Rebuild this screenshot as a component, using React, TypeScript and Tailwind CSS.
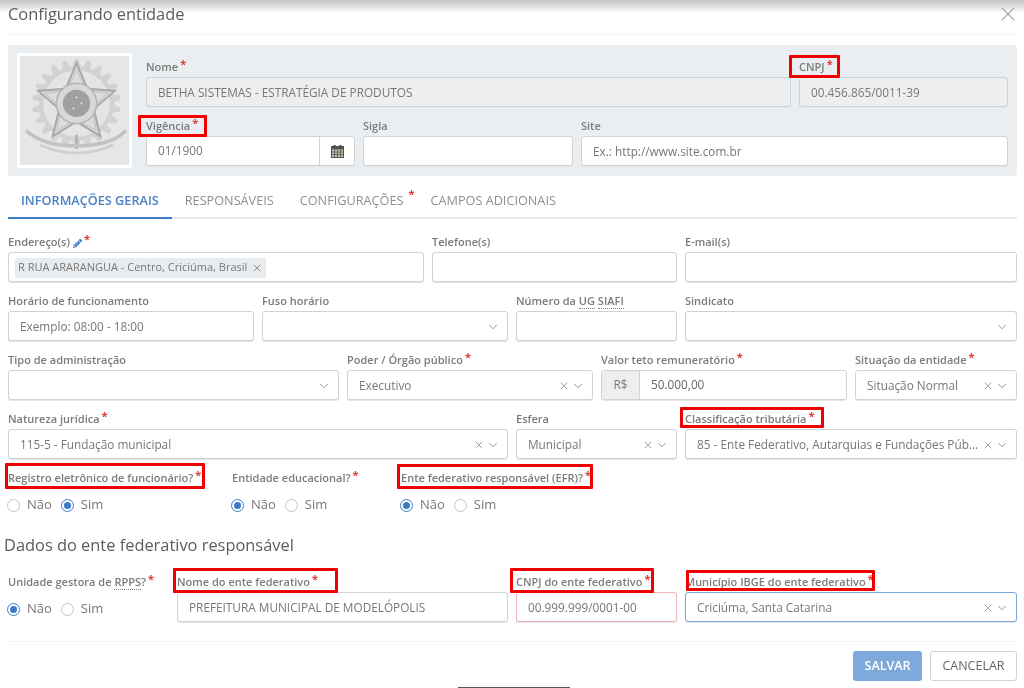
import type { ReactNode } from "react";
import { ChevronDown, X } from "lucide-react";
import { FaPencilAlt } from "react-icons/fa";

const inputBase =
  "h-[30px] w-full border border-[#d0d3d5] rounded-[3px] flex items-center pt-[1px] text-[11.8px] text-[#777] shadow-[0_1px_0_#e3e5e6]";

const redBox = "absolute border-[3px] border-[#f00000] rounded-[1px]";

function Star() {
  return (
    <span className="inline-block ml-[2px] text-[#e03a3a] text-[11px] font-bold leading-none -translate-y-[4px]">
      *
    </span>
  );
}

function Label({ text, required, box, children }: { text?: string; required?: boolean; box?: string; children?: ReactNode }) {
  return (
    <div className="relative h-[19px] flex items-center text-[11px] font-semibold text-[#7b7b7b] whitespace-nowrap">
      <span>{text}{children}</span>
      {required && <Star />}
      {box && <div className={`${redBox} ${box}`} />}
    </div>
  );
}

function Input({ value, placeholder, disabled, className }: { value?: string; placeholder?: string; disabled?: boolean; className?: string }) {
  return (
    <div className={`${inputBase} px-[11px] ${disabled ? "bg-[#eceef0] text-[#8f8f8f]" : "bg-white"} ${placeholder ? "text-[#9a9a9a]" : ""} ${className ?? ""}`}>
      {value ?? placeholder}
    </div>
  );
}

function Select({ value, clear, className }: { value?: string; clear?: boolean; className?: string }) {
  return (
    <div className={`${inputBase} bg-white pl-[11px] pr-[7px] ${className ?? ""}`}>
      <span className="flex-1 whitespace-nowrap">{value}</span>
      {clear && <X size={12} strokeWidth={1.5} className="text-[#888] mr-[1px] shrink-0" />}
      <ChevronDown size={14} strokeWidth={1.5} className="text-[#888] shrink-0" />
    </div>
  );
}

function Radios({ checked }: { checked: "Não" | "Sim" }) {
  return (
    <div className="h-[30px] -ml-[1px] pt-[4px] flex items-center gap-[9px] text-[13px] text-[#777]">
      {(["Não", "Sim"] as const).map((opt) => (
        <div key={opt} className="flex items-center gap-[7px]">
          {opt === checked ? (
            <span className="w-[13px] h-[13px] rounded-full border-[1.5px] border-[#3b7cc9] flex items-center justify-center">
              <span className="w-[7px] h-[7px] rounded-full bg-[#3b7cc9]" />
            </span>
          ) : (
            <span className="w-[13px] h-[13px] rounded-full border-[1.5px] border-[#c4c4c4]" />
          )}
          <span>{opt}</span>
        </div>
      ))}
    </div>
  );
}

function Abbr({ children }: { children: ReactNode }) {
  return <span className="border-b border-dotted border-[#888]">{children}</span>;
}

function CalendarIcon() {
  return (
    <svg viewBox="0 0 13 13" className="w-[13px] h-[13px]">
      <rect x="0.5" y="1.5" width="12" height="11" fill="#c9bfa8" stroke="#555" />
      <rect x="0.5" y="1.5" width="12" height="3" fill="#555" />
      <rect x="2.5" y="0" width="2" height="3" fill="#444" />
      <rect x="8.5" y="0" width="2" height="3" fill="#444" />
      <path d="M0.5 7H12.5M0.5 9.5H12.5M3.5 4.5V12.5M6.5 4.5V12.5M9.5 4.5V12.5" stroke="#555" strokeWidth="0.8" />
    </svg>
  );
}

function polar(cx: number, cy: number, r: number, deg: number) {
  const a = ((deg - 90) * Math.PI) / 180;
  return `${(cx + r * Math.cos(a)).toFixed(1)},${(cy + r * Math.sin(a)).toFixed(1)}`;
}

function CoatOfArms() {
  const gear = Array.from({ length: 22 }, (_, i) => {
    const s = i * (360 / 22);
    return [polar(56, 47, 37, s - 6), polar(56, 47, 44, s - 2.5), polar(56, 47, 44, s + 2.5), polar(56, 47, 37, s + 6)].join(" ");
  }).join(" ");
  const star = Array.from({ length: 10 }, (_, i) => polar(56, 47, i % 2 ? 18 : 40, i * 36)).join(" ");
  const innerStar = Array.from({ length: 10 }, (_, i) => polar(56, 47, i % 2 ? 16 : 33, i * 36)).join(" ");
  return (
    <svg viewBox="0 0 108 108" className="w-full h-full blur-[0.5px]">
      <polygon points={gear} fill="#d2d2d2" />
      <circle cx="56" cy="47" r="33" fill="#e4e4e4" />
      <polygon points={star} fill="#dcdcdc" stroke="#a8a8a8" strokeWidth="2" />
      <polygon points={innerStar} fill="none" stroke="#c2c2c2" strokeWidth="1" />
      <circle cx="56" cy="47" r="20" fill="#d8d8d8" stroke="#b4b4b4" strokeWidth="1.5" />
      <circle cx="56" cy="47" r="13.5" fill="#a0a0a0" />
      <circle cx="56" cy="41" r="0.9" fill="#eee" />
      <circle cx="61" cy="47" r="0.9" fill="#eee" />
      <circle cx="53" cy="52" r="0.9" fill="#eee" />
      <path d="M56 78 V92" stroke="#b4b4b4" strokeWidth="3" />
      <path d="M6 74 C 20 86 36 89 56 89 C 76 89 92 86 105 74" fill="none" stroke="#c2c2c2" strokeWidth="3.5" />
      <path d="M20 88 C 32 94 44 96 56 96 C 68 96 80 94 92 88" fill="none" stroke="#cdcdcd" strokeWidth="2.5" />
    </svg>
  );
}

export default function App() {
  return (
    <div
      className="relative w-[1024px] h-[688px] overflow-hidden bg-white px-[8px] text-[#777] blur-[0.4px]"
      style={{ fontFamily: '"Open Sans", sans-serif' }}
    >
      {/* sombra do topo */}
      <div className="absolute left-0 right-0 top-0 h-[13px] bg-gradient-to-b from-[#c4c4c4] to-white" />

      {/* Cabeçalho */}
      <div className="relative h-[35px] border-b border-[#f4f4f4] flex items-center justify-between pb-[7px] pt-[1px]">
        <h1 className="text-[16.4px] text-[#5c5c5c]">Configurando entidade</h1>
        <X size={24} strokeWidth={1.5} className="text-[#b5b5b5] -mr-[4px]" />
      </div>

      {/* Painel da entidade */}
      <div className="mt-[10px] h-[131px] bg-[#ebeef0] rounded-[3px] pl-[9px] pr-[9px] pt-[13px] flex gap-[14px] w-[1009px]">
        <div className="-mt-[5px] w-[115px] h-[115px] bg-white p-[3px] shrink-0">
          <div className="w-full h-full bg-[#e6e6e6]">
            <CoatOfArms />
          </div>
        </div>
        <div className="flex-1">
          <div className="flex gap-[8px]">
            <div className="w-[645px]">
              <Label text="Nome" required />
              <Input value="BETHA SISTEMAS - ESTRATÉGIA DE PRODUTOS" disabled />
            </div>
            <div className="w-[209px]">
              <Label text="CNPJ" required box="-left-[10px] -top-[3px] w-[51px] h-[23px]" />
              <Input value="00.456.865/0011-39" disabled />
            </div>
          </div>
          <div className="flex gap-[8px] mt-[10px]">
            <div className="w-[209px]">
              <Label text="Vigência" required box="-left-[8px] -top-[2px] w-[69px] h-[22px]" />
              <div className={`${inputBase} bg-white overflow-hidden !pt-0`}>
                <span className="flex-1 px-[11px]">01/1900</span>
                <span className="w-[35px] h-full border-l border-[#d0d3d5] flex items-center justify-center">
                  <CalendarIcon />
                </span>
              </div>
            </div>
            <div className="w-[210px]">
              <Label text="Sigla" />
              <Input />
            </div>
            <div className="w-[427px]">
              <Label text="Site" />
              <Input placeholder="Ex.: http://www.site.com.br" />
            </div>
          </div>
        </div>
      </div>

      {/* Abas */}
      <div className="mt-[8px] h-[35px] w-[1009px] border-b-2 border-[#e8e8e8] flex text-[12.7px] text-[#8f8f8f]">
        <div className="h-[35px] px-[13px] flex items-center border-b-2 border-[#3b7cc9] text-[#4a80c4] font-semibold">INFORMAÇÕES GERAIS</div>
        <div className="h-[33px] px-[13px] flex items-center">RESPONSÁVEIS</div>
        <div className="h-[33px] pl-[13px] pr-[14px] flex items-center relative">
          CONFIGURAÇÕES
          <span className="absolute right-[3px] top-[4px] text-[#e03a3a] text-[11px] font-bold leading-none">*</span>
        </div>
        <div className="h-[33px] px-[13px] flex items-center">CAMPOS ADICIONAIS</div>
      </div>

      {/* Formulário */}
      <div className="w-[1009px] mt-[14px] flex flex-col gap-[10px]">
        <div className="flex gap-[8px]">
          <div className="w-[416px]">
            <Label required>
              Endereço(s)
              <FaPencilAlt size={9} className="inline ml-[3px] text-[#3b7cc9]" />
            </Label>
            <div className={`${inputBase} bg-white pl-[6px]`}>
              <span className="h-[20px] px-[3px] flex items-center gap-[4px] bg-[#e9ecef] rounded-[2px] text-[11px]">
                R RUA ARARANGUA - Centro, Criciúma, Brasil
                <X size={12} strokeWidth={1.5} className="text-[#777]" />
              </span>
            </div>
          </div>
          <div className="w-[245px]">
            <Label text="Telefone(s)" />
            <Input />
          </div>
          <div className="w-[332px]">
            <Label text="E-mail(s)" />
            <Input />
          </div>
        </div>

        <div className="flex gap-[8px]">
          <div className="w-[246px]">
            <Label text="Horário de funcionamento" />
            <Input placeholder="Exemplo: 08:00 - 18:00" />
          </div>
          <div className="w-[246px]">
            <Label text="Fuso horário" />
            <Select />
          </div>
          <div className="w-[161px]">
            <Label>
              Número da <Abbr>UG</Abbr> <Abbr>SIAFI</Abbr>
            </Label>
            <Input />
          </div>
          <div className="w-[332px]">
            <Label text="Sindicato" />
            <Select />
          </div>
        </div>

        <div className="flex gap-[8px]">
          <div className="w-[331px]">
            <Label text="Tipo de administração" />
            <Select />
          </div>
          <div className="w-[246px]">
            <Label text="Poder / Órgão público" required />
            <Select value="Executivo" clear />
          </div>
          <div className="w-[246px]">
            <Label text="Valor teto remuneratório" required />
            <div className={`${inputBase} bg-white overflow-hidden !pt-0`}>
              <span className="w-[38px] h-full bg-[#eceef0] border-r border-[#d0d3d5] flex items-center justify-center shrink-0">R$</span>
              <span className="px-[11px] text-[#666]">50.000,00</span>
            </div>
          </div>
          <div className="w-[162px]">
            <Label text="Situação da entidade" required />
            <Select value="Situação Normal" clear />
          </div>
        </div>

        <div className="flex gap-[8px]">
          <div className="w-[500px]">
            <Label text="Natureza jurídica" required />
            <Select value="115-5 - Fundação municipal" clear />
          </div>
          <div className="w-[161px]">
            <Label text="Esfera" />
            <Select value="Municipal" clear />
          </div>
          <div className="w-[332px]">
            <Label text="Classificação tributária" required box="-left-[5px] -top-[3px] w-[144px] h-[21px]" />
            <Select value="85 - Ente Federativo, Autarquias e Fundações Púb..." clear />
          </div>
        </div>

        <div className="flex">
          <div className="w-[223px]">
            <Label text="Registro eletrônico de funcionário?" required box="-left-[3px] -top-[6px] w-[200px] h-[26px]" />
            <Radios checked="Sim" />
          </div>
          <div className="w-[170px] pl-[1px]">
            <Label text="Entidade educacional?" required />
            <Radios checked="Não" />
          </div>
          <div className="w-[300px]">
            <Label text="Ente federativo responsável (EFR)?" required box="-left-[4px] -top-[5px] w-[196px] h-[25px]" />
            <Radios checked="Não" />
          </div>
        </div>
      </div>

      <h2 className="mt-[12px] -ml-[4px] h-[30px] flex items-center text-[16.4px] text-[#5c5c5c]">Dados do ente federativo responsável</h2>

      <div className="w-[1009px] mt-[13px] flex gap-[8px]">
        <div className="w-[161px]">
          <Label required>
            Unidade gestora de <Abbr>RPPS</Abbr>?
          </Label>
          <Radios checked="Não" />
        </div>
        <div className="w-[331px]">
          <Label text="Nome do ente federativo" required box="-left-[4px] -top-[5px] w-[165px] h-[25px]" />
          <Input value="PREFEITURA MUNICIPAL DE MODELÓPOLIS" className="text-[#666]" />
        </div>
        <div className="w-[161px]">
          <Label text="CNPJ do ente federativo" required box="-left-[6px] -top-[5px] w-[144px] h-[25px]" />
          <Input value="00.999.999/0001-00" className="!border-[#f3b4b8] text-[#666]" />
        </div>
        <div className="w-[332px]">
          <Label text="Município IBGE do ente federativo" required box="left-[1px] -top-[3px] w-[189px] h-[21px]" />
          <Select value="Criciúma, Santa Catarina" clear className="!border-[#7aa7dc]" />
        </div>
      </div>

      {/* Rodapé */}
      <div className="w-[1009px] mt-[19px] border-t border-[#f4f4f4] pt-[9px] flex justify-end gap-[8px]">
        <button className="w-[69px] h-[30px] rounded-[3px] bg-[#7fa9db] text-white text-[12.5px] font-semibold">SALVAR</button>
        <button className="w-[87px] h-[30px] rounded-[3px] bg-white border border-[#d0d3d5] text-[#666] text-[12.5px]">CANCELAR</button>
      </div>

      <div className="absolute left-[458px] bottom-0 w-[112px] h-[1px] bg-[#555]" />
    </div>
  );
}
